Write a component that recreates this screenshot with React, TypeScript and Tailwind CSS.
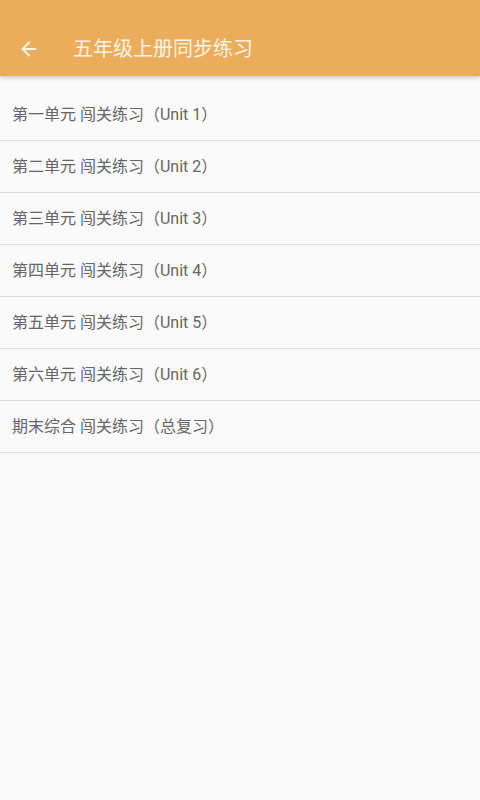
import { ArrowLeft } from 'lucide-react'

const units = [
  '第一单元 闯关练习（Unit 1）',
  '第二单元 闯关练习（Unit 2）',
  '第三单元 闯关练习（Unit 3）',
  '第四单元 闯关练习（Unit 4）',
  '第五单元 闯关练习（Unit 5）',
  '第六单元 闯关练习（Unit 6）',
  '期末综合 闯关练习（总复习）',
]

const App = () => {
  return (
    <div
      className="min-h-[800px] bg-[#fafafa]"
      style={{ fontFamily: 'Roboto, "Noto Sans CJK SC", sans-serif' }}
    >
      {/* Toolbar */}
      <div className="h-[76px] bg-[#ebad5b] flex items-center pt-[22px] shadow-[0_2px_4px_rgba(0,0,0,0.18)] relative">
        <ArrowLeft className="w-[22px] h-[22px] text-[#fdf3e3] ml-[18px]" strokeWidth={2.2} />
        <h1 className="ml-[33px] text-[20px] text-[#fdf3e3]">五年级上册同步练习</h1>
      </div>

      {/* List */}
      <div className="pt-[13px]">
        {units.map((u) => (
          <div
            key={u}
            className="h-[52px] flex items-center pl-[12px] border-b border-[#dedede] text-[16px] text-[#666666]"
          >
            {u}
          </div>
        ))}
      </div>
    </div>
  )
}

export default App
